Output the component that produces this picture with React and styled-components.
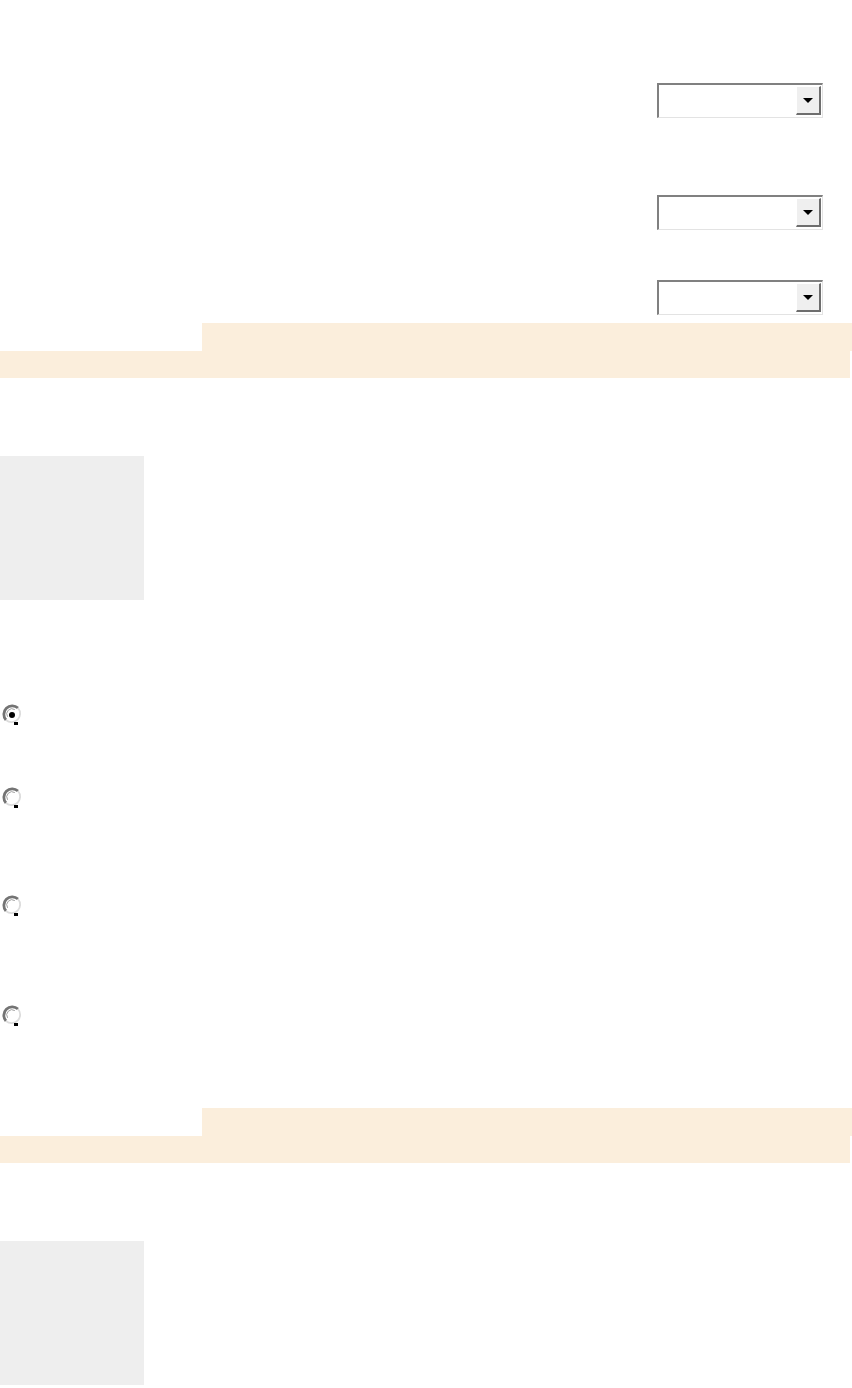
import styled, { createGlobalStyle } from "styled-components";

const GlobalStyle = createGlobalStyle`
  html, body {
    margin: 0;
    padding: 0;
    background: #ffffff;
    font-family: "Liberation Sans", Arial, sans-serif;
  }
`;

const Page = styled.div`
  width: 852px;
  height: 1388px;
  overflow: hidden;
  display: flex;
  flex-direction: column;
`;

// 상단 셀렉트 영역
const SelectRow = styled.div`
  display: flex;
  justify-content: flex-end;
  padding-right: 29px;
  margin-top: ${(p) => p.$top}px;
`;

const SelectBox = styled.div`
  width: 166px;
  height: 35px;
  box-sizing: border-box;
  border-top: 2px solid #808080;
  border-left: 2px solid #808080;
  border-right: 1px solid #e3e3e3;
  border-bottom: 1px solid #e3e3e3;
  background: #ffffff;
  display: flex;
  justify-content: flex-end;
  padding: 1px 1px 2px 0;
`;

const ArrowButton = styled.div`
  width: 25px;
  box-sizing: border-box;
  background: #efefef;
  border-top: 1px solid #ffffff;
  border-left: 1px solid #ffffff;
  border-right: 2px solid #6e6e6e;
  border-bottom: 2px solid #6e6e6e;
  display: flex;
  align-items: center;
  justify-content: center;

  &::after {
    content: "";
    width: 0;
    height: 0;
    border-left: 5px solid transparent;
    border-right: 5px solid transparent;
    border-top: 5px solid #000000;
  }
`;

const Band = styled.div`
  display: flex;
  flex-direction: column;
  margin-top: ${(p) => p.$top}px;
`;

const BandTop = styled.div`
  margin-left: 202px;
  height: 28px;
  background: #fbeedc;
`;

const BandBottom = styled.div`
  width: 850px;
  height: 27px;
  background: #fbeedc;
`;

const GrayBox = styled.div`
  width: 144px;
  height: 144px;
  background: #eeeeee;
  margin-top: ${(p) => p.$top}px;
`;

const RadioRow = styled.div`
  display: flex;
  align-items: flex-start;
  height: 24px;
  padding-left: 1px;
  margin-top: ${(p) => p.$top}px;
`;

const Radio = ({ checked }) => (
  <svg width="22" height="24" viewBox="0 0 22 24">
    <circle cx="11" cy="11" r="8.5" fill="#ffffff" />
    <path d="M5 17 A8.5 8.5 0 0 1 17 5" fill="none" stroke="#747474" strokeWidth="2.8" />
    <path d="M17 5 A8.5 8.5 0 0 1 5 17" fill="none" stroke="#dcdcdc" strokeWidth="1.8" />
    <path d="M6.6 13.8 A5.2 5.2 0 0 1 13.8 6.6" fill="none" stroke="#a0a0a0" strokeWidth="1" />
    <rect x="13" y="19" width="4" height="3" fill="#000000" />
    {checked && <circle cx="11" cy="12" r="3" fill="#000000" />}
  </svg>
);

const selects = [83, 77, 50];
const radios = [
  { top: 103, checked: true },
  { top: 59 },
  { top: 84 },
  { top: 86 },
];

export default function App() {
  return (
    <Page>
      <GlobalStyle />
      {selects.map((top, i) => (
        <SelectRow key={i} $top={top}>
          <SelectBox>
            <ArrowButton />
          </SelectBox>
        </SelectRow>
      ))}
      <Band $top={8}>
        <BandTop />
        <BandBottom />
      </Band>
      <GrayBox $top={78} />
      {radios.map((r, i) => (
        <RadioRow key={i} $top={r.top}>
          <Radio checked={r.checked} />
        </RadioRow>
      ))}
      <Band $top={80}>
        <BandTop />
        <BandBottom />
      </Band>
      <GrayBox $top={78} />
    </Page>
  );
}
